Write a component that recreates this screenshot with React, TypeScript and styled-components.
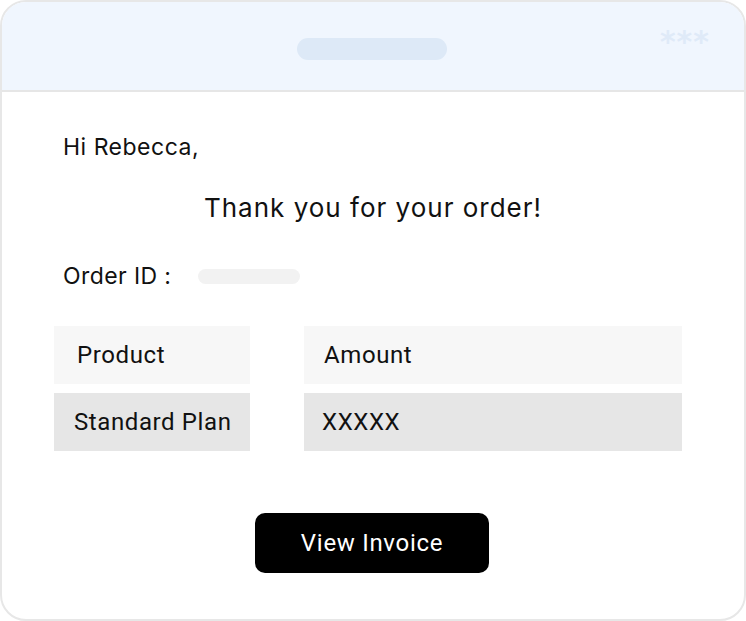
import React from "react";
import styled, { createGlobalStyle } from "styled-components";

const GlobalStyle = createGlobalStyle`
  html, body {
    margin: 0;
    padding: 0;
    background: #ffffff;
  }
  * {
    box-sizing: border-box;
  }
`;

// outer mail window
const Card = styled.div`
  width: 746px;
  height: 621px;
  border: 2px solid #e7e7e7;
  border-radius: 26px;
  overflow: hidden;
  display: flex;
  flex-direction: column;
  font-family: "Inter", "Noto Sans", sans-serif;
  color: #111111;
`;

const Header = styled.div`
  height: 90px;
  flex-shrink: 0;
  background: #f0f6fe;
  border-bottom: 2px solid #e6e6e6;
  display: grid;
  grid-template-columns: 1fr 150px 1fr;
  align-items: center;
  padding-top: 6px;
`;

const AddressPill = styled.div`
  grid-column: 2;
  height: 22px;
  border-radius: 11px;
  background: #dde9f7;
  transform: translateX(-1px);
`;

const Dots = styled.div`
  justify-self: end;
  align-self: start;
  margin: 19px 34px 0 0;
  font-size: 30px;
  line-height: 30px;
  letter-spacing: 1px;
  font-family: "DejaVu Sans", sans-serif;
  font-weight: 700;
  color: #dfeaf8;
`;

const Content = styled.div`
  padding: 41px 64px 0 52px;
  display: flex;
  flex-direction: column;
`;

const Greeting = styled.div`
  margin-left: 9px;
  font-size: 23px;
  line-height: 28px;
  letter-spacing: 0.5px;
`;

const Title = styled.div`
  margin-top: 32px;
  text-align: center;
  font-size: 26px;
  line-height: 30px;
  letter-spacing: 1px;
  padding-left: 12px;
`;

const OrderRow = styled.div`
  margin-top: 39px;
  margin-left: 9px;
  display: flex;
  align-items: center;
  gap: 27px;
  font-size: 23px;
  line-height: 28px;
  letter-spacing: 0.4px;
`;

const IdPlaceholder = styled.div`
  width: 102px;
  height: 15px;
  border-radius: 8px;
  background: #f2f2f2;
`;

const Table = styled.div`
  margin-top: 36px;
  display: grid;
  grid-template-columns: 196px 378px;
  column-gap: 54px;
  row-gap: 9px;
`;

const Cell = styled.div<{ $shade: "light" | "dark"; $pad: number }>`
  height: 58px;
  display: flex;
  align-items: center;
  padding-left: ${(p) => p.$pad}px;
  background: ${(p) => (p.$shade === "light" ? "#f7f7f7" : "#e6e6e6")};
  font-family: "Roboto", "Liberation Sans", sans-serif;
  font-size: 24px;
  letter-spacing: 0.6px;
  color: #111111;
`;

const ButtonRow = styled.div`
  margin-top: 62px;
  display: flex;
  justify-content: center;
  padding-left: 10px;
`;

const InvoiceButton = styled.button`
  width: 234px;
  height: 60px;
  border: none;
  border-radius: 10px;
  background: #000000;
  color: #ffffff;
  font-family: "Roboto", "Liberation Sans", sans-serif;
  font-size: 24px;
  letter-spacing: 0.7px;
  cursor: pointer;
`;

const App = () => {
  return (
    <>
      <GlobalStyle />
      <Card>
        <Header>
          <AddressPill />
          <Dots>***</Dots>
        </Header>
        <Content>
          <Greeting>Hi Rebecca,</Greeting>
          <Title>Thank you for your order!</Title>
          <OrderRow>
            <span>Order ID :</span>
            <IdPlaceholder />
          </OrderRow>
          <Table>
            <Cell $shade="light" $pad={23}>Product</Cell>
            <Cell $shade="light" $pad={20}>Amount</Cell>
            <Cell $shade="dark" $pad={20}>Standard Plan</Cell>
            <Cell $shade="dark" $pad={18}>XXXXX</Cell>
          </Table>
          <ButtonRow>
            <InvoiceButton>View Invoice</InvoiceButton>
          </ButtonRow>
        </Content>
      </Card>
    </>
  );
};

export default App;
